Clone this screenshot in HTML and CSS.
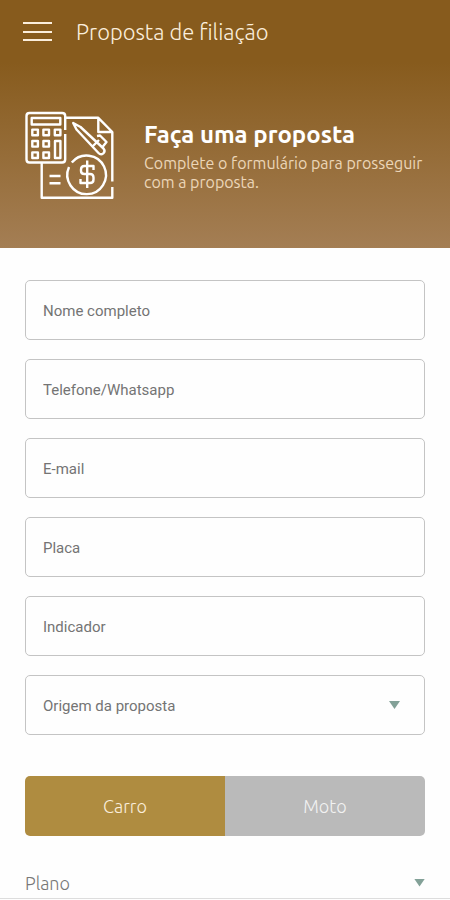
FILE: index.html
```html
<!DOCTYPE html>
<html lang="pt-BR">
<head>
<meta charset="utf-8">
<meta name="viewport" content="width=device-width, initial-scale=1">
<title>Proposta de filiação</title>
<link rel="stylesheet" href="styles.css">
</head>
<body>
<header class="header">
  <div class="topbar">
    <button class="menu" type="button" aria-label="Menu">
      <svg width="29" height="20" viewBox="0 0 29 20" stroke="currentColor" stroke-width="2"><path d="M0 1h29M0 10h29M0 18h29"/></svg>
    </button>
    <h1 class="title">Proposta de filiação</h1>
  </div>
  <div class="intro">
    <svg class="intro-icon" width="90" height="90" viewBox="9 11 90 90" fill="none" stroke="currentColor" stroke-width="2.4" stroke-linejoin="round" stroke-linecap="butt" aria-hidden="true">
      <path d="M50.2 30V16q0-3-3-3H14.5q-3 0-3 3v43.500q0 3 3 3h32.700q3 0 3-3V34"/>
      <path d="M16.700 18h28.600v6.500H16.700z"/>
      <path d="M17.300 29.600h5.600v5.600h-5.600zM28.400 29.600h5.600v5.600h-5.600zM39.800 29.600h5.600v5.600h-5.600zM17.300 41h5.600v5.600h-5.600zM28.400 41h5.600v5.600h-5.600zM17.300 52.400h5.600v5.600h-5.600zM28.400 52.400h5.600v5.600h-5.600zM40 41h5.400v17H40z"/>
      <path d="M51 17.800h32.300L97.300 32v49.500M97.300 87v10.800H26.700V63M83.300 18v14h14"/>
      <path d="M58.200 23l3.300 6.500L83.500 53q2.300 2.500 4.800.4 2.400-2.300.2-4.900L65.500 27zM77.500 46.500l6.500-6.500M82 36l3-.5 6.500 6.500-4 5"/>
      <path d="M54 67A19.300 19.300 0 1 0 56.800 62.500"/>
      <path d="M78.500 70v-4H69.500q-3.500 0-3.500 3.500v1.500q0 3 3.500 3h5.500q3.500 0 3.500 3.500v2q0 3.500-3.500 3.500H65.500v-4M72.200 60.500V88"/>
      <path d="M34.500 76h11M34.500 83.300h11"/>
    </svg>
    <div class="intro-text">
      <h2 class="intro-title">Faça uma proposta</h2>
      <p class="intro-copy">Complete o formulário para prosseguir com a proposta.</p>
    </div>
  </div>
</header>
<main>
  <form class="form">
    <input class="field" type="text" placeholder="Nome completo" aria-label="Nome completo">
    <input class="field" type="tel" placeholder="Telefone/Whatsapp" aria-label="Telefone/Whatsapp">
    <input class="field" type="email" placeholder="E-mail" aria-label="E-mail">
    <input class="field" type="text" placeholder="Placa" aria-label="Placa">
    <input class="field" type="text" placeholder="Indicador" aria-label="Indicador">
    <div class="select-wrap select-boxed">
      <select class="field" aria-label="Origem da proposta"><option>Origem da proposta</option></select>
    </div>
    <div class="toggle">
      <button class="toggle-option active" type="button" aria-pressed="true">Carro</button>
      <button class="toggle-option" type="button" aria-pressed="false">Moto</button>
    </div>
    <div class="select-wrap">
      <select class="plan" aria-label="Plano"><option>Plano</option></select>
    </div>
  </form>
</main>
</body>
</html>
```
FILE: styles.css
```css
* {
  box-sizing: border-box;
}

body {
  margin: 0;
  background: #fefefe;
  font-family: Ubuntu, "Noto Sans", sans-serif;
}

h1,
h2,
p {
  margin: 0;
}

.header {
  color: #fff;
  background: linear-gradient(#875b1d 25%, #a47e54);
  padding-bottom: 47px;
}

.topbar {
  display: flex;
  align-items: center;
  gap: 24px;
  height: 63px;
  padding: 0 23px;
}

.menu {
  display: flex;
  padding: 0;
  border: 0;
  background: none;
  color: #fbeedc;
}

.title {
  font-size: 22px;
  font-weight: 300;
  color: #fbeedc;
}

.intro {
  display: flex;
  gap: 30px;
  padding: 48px 24px 0;
}

.intro-icon {
  flex: none;
}

.intro-text {
  padding-top: 8px;
}

.intro-title {
  font-size: 24px;
  line-height: 32px;
  font-weight: 700;
}

.intro-copy {
  padding-top: 3px;
  font-size: 16px;
  line-height: 19px;
  font-weight: 400;
  color: #ecd6b8;
}

.form {
  display: flex;
  flex-direction: column;
  gap: 19px;
  padding: 32px 25px 0;
  border-bottom: 1px solid #ddd;
}

.field {
  width: 100%;
  height: 60px;
  padding: 2px 17px 0;
  border: 1px solid #c4c4c4;
  border-radius: 5px;
  background: #fefefe;
  color: #747474;
  font-family: Roboto, sans-serif;
  font-size: 15px;
}

.field::placeholder {
  color: #747474;
  opacity: 1;
}

select {
  display: block;
  appearance: none;
}

.select-wrap {
  position: relative;
}

.select-wrap::after {
  content: "";
  position: absolute;
  right: 0;
  top: 50%;
  width: 11px;
  height: 8px;
  margin-top: -4px;
  background: #83a198;
  clip-path: polygon(0 0, 100% 0, 50% 100%);
  pointer-events: none;
}

.select-boxed::after {
  right: 25px;
}

.toggle {
  display: flex;
  margin: 22px 0 12px;
  border-radius: 5px;
  overflow: hidden;
}

.toggle-option {
  flex: 1;
  height: 60px;
  padding: 0;
  border: 0;
  background: #bababa;
  color: #f2f2f2;
  font-family: inherit;
  font-size: 18px;
  font-weight: 300;
}

.toggle-option.active {
  background: #af8c40;
  color: #fbeedc;
}

.plan {
  width: 100%;
  height: 31px;
  padding: 0;
  border: 0;
  background: none;
  color: #777;
  font-family: inherit;
  font-size: 18px;
  font-weight: 300;
}
```
